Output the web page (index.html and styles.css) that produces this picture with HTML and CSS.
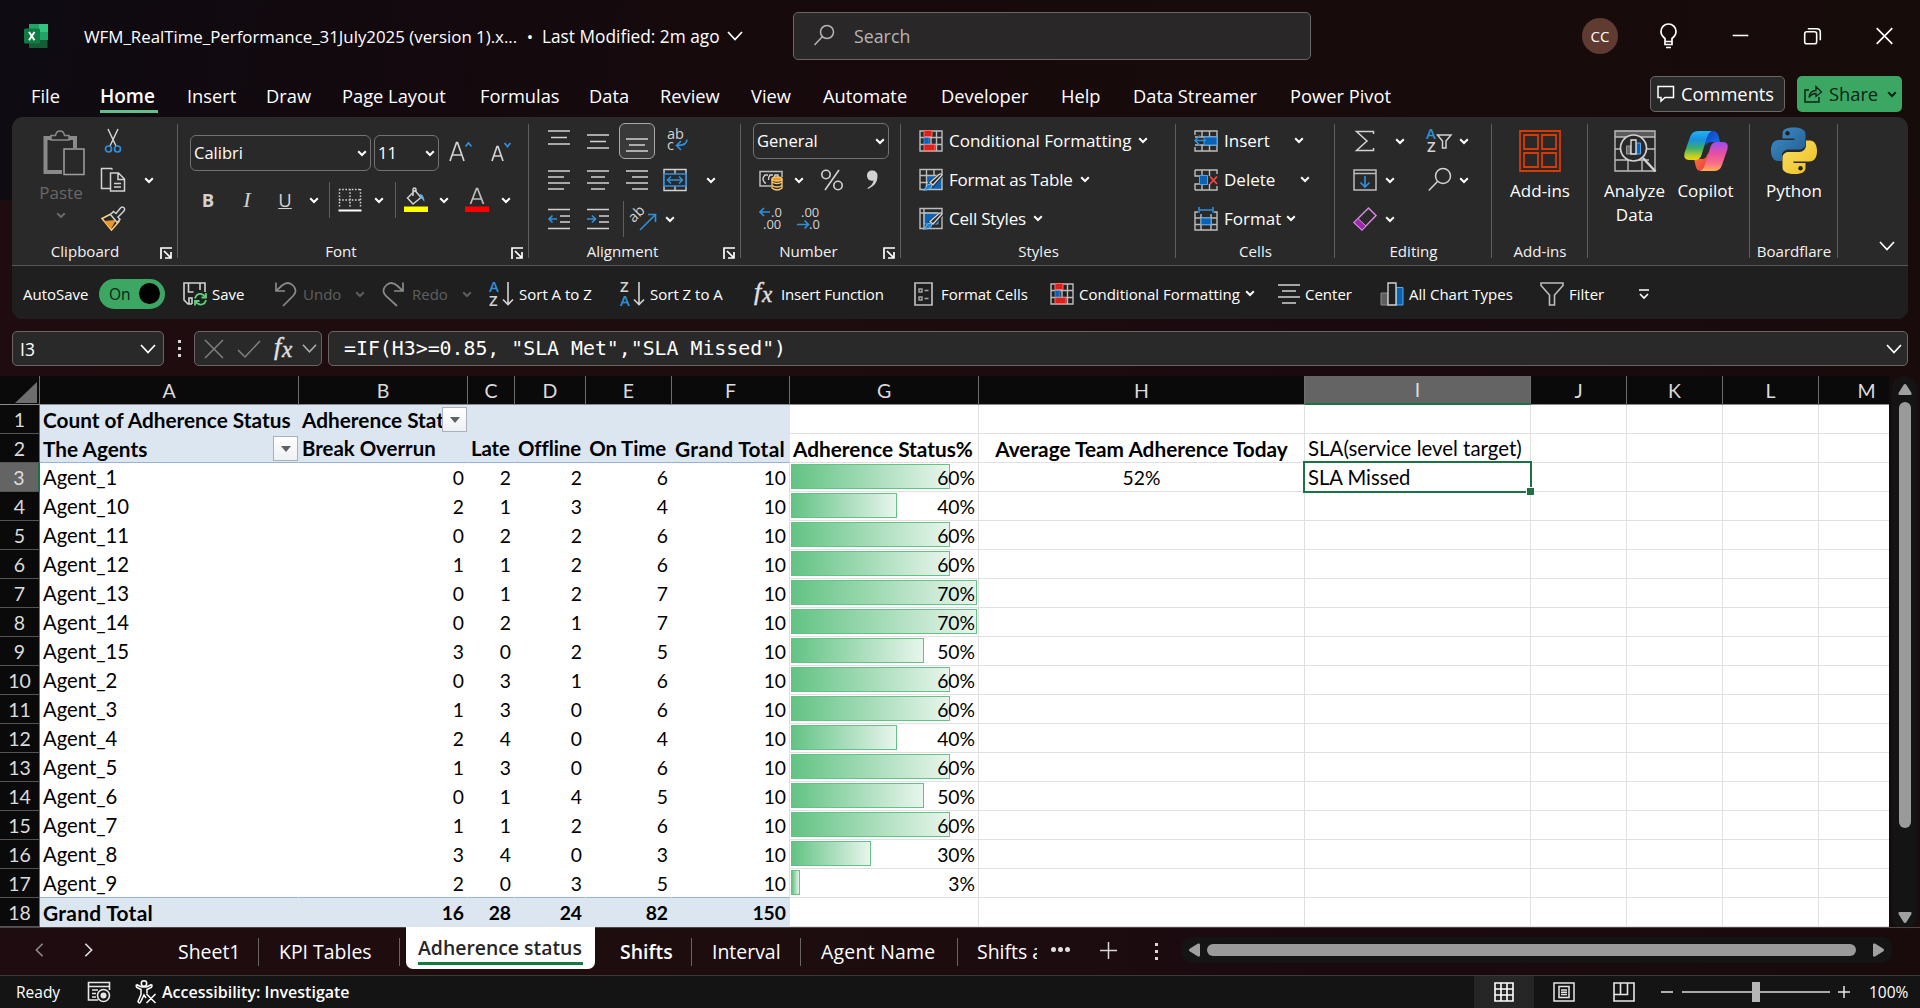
FILE: index.html
```html
<!DOCTYPE html>
<html lang="en">
<head>
<meta charset="utf-8">
<title>WFM_RealTime_Performance_31July2025</title>
<link rel="stylesheet" href="styles.css">
</head>
<body>
<svg class="defs" aria-hidden="true">
  <defs>
    <linearGradient id="g-cool" x1="0" y1="0" x2="0" y2="1"><stop offset="0" stop-color="#22b4f2"/><stop offset=".3" stop-color="#1591e0"/><stop offset=".6" stop-color="#3fae6a"/><stop offset=".85" stop-color="#b9cf2a"/><stop offset="1" stop-color="#f3d10a"/></linearGradient>
    <linearGradient id="g-warm" x1="0" y1="0" x2="0" y2="1"><stop offset="0" stop-color="#9a4df0"/><stop offset=".4" stop-color="#e84fa0"/><stop offset=".75" stop-color="#f9708a"/><stop offset="1" stop-color="#fdb24a"/></linearGradient>
    <linearGradient id="g-deep" x1="0" y1="0" x2="1" y2="1"><stop offset="0" stop-color="#0f3fc4"/><stop offset="1" stop-color="#1a74e8"/></linearGradient>
    <linearGradient id="g-fire" x1="0" y1="0" x2="1" y2="1"><stop offset="0" stop-color="#ff7a3c"/><stop offset="1" stop-color="#e23c3c"/></linearGradient>
    <linearGradient id="g-pyb" x1="0" y1="0" x2="1" y2="1"><stop offset="0" stop-color="#3c8fd0"/><stop offset="1" stop-color="#245a88"/></linearGradient>
    <linearGradient id="g-pyy" x1="1" y1="1" x2="0" y2="0"><stop offset="0" stop-color="#f7e06a"/><stop offset="1" stop-color="#f0bf1c"/></linearGradient>
  </defs>
  <symbol id="chev" viewBox="0 0 10 10"><path d="M1.2 3.2 5 7 8.8 3.2" fill="none" stroke="currentColor" stroke-width="2"/></symbol>
  <symbol id="chev-l" viewBox="0 0 16 16"><path d="M1 4l7 7.5L15 4" fill="none" stroke="currentColor" stroke-width="1.7"/></symbol>
  <symbol id="launch" viewBox="0 0 12 12"><path d="M1 12V1h11M4 4l6.5 6.5M11 5v6H5" fill="none" stroke="#fff" stroke-width="1.7"/></symbol>
  <symbol id="cf" viewBox="0 0 24 22"><path d="M1 1h22v20H1zM1 7.500h22M1 14.500h22M6 1v20M12 1v20M17.500 1v20" fill="none" stroke="#bdbdbd" stroke-width="1.400"/><path d="M5 .500h8v6H5zM5 14.500h11v6H5z" fill="#d9221c" stroke="#ff6b66"/><path d="M5 7.500h5v6.500H5z" fill="#0a62b5" stroke="#5aa8e8" stroke-width=".7"/></symbol>
  <symbol id="brush" viewBox="0 0 24 24"><path d="M22.500 8 14 17.500 11 15 21 6.500z" fill="#292929" stroke="#292929" stroke-width="3"/><path d="M23 7 14 17l-3-2.500L20 6.500q2-1.500 3 .5z" fill="#292929" stroke="#d6d6d6" stroke-width="1.300"/><path d="M13 17.500q-1 5-9 4.500 3-1 3.500-4 2.500-3.500 5.500-.5z" fill="#1f7ecb" stroke="#7cc0f5"/></symbol>
  <symbol id="tbl" viewBox="0 0 24 24"><path d="M8 8h15v14H8z" fill="#0a62b5"/><path d="M1 1.500h22v20H1zM1 7.500h22M1 14.500h8M7.500 1.500v20M15 1.500v6" fill="none" stroke="#bdbdbd" stroke-width="1.400"/><use href="#brush"/></symbol>
  <symbol id="cst" viewBox="0 0 24 24"><path d="M5 6h14v11H5z" fill="#0a62b5" stroke="#4da3e6"/><path d="M1 1.500h22v20H1zM1 6h22M5 1.500v20" fill="none" stroke="#bdbdbd" stroke-width="1.400"/><use href="#brush"/></symbol>
  <symbol id="lc" viewBox="0 0 22 22"><path d="M0 2h22M4 8h14M0 14h22M4 20h14" stroke="#d2d2d2" stroke-width="1.500"/></symbol>
  <symbol id="fx" viewBox="0 0 24 26"><text x="2" y="19" class="fx-f">f</text><text x="10" y="21" class="fx-x">x</text></symbol>
</svg>

<header class="titlebar">
  <svg class="xl" viewBox="0 0 24 24"><path d="M5 0h18.500v24H5z" fill="#185c37"/><path d="M5 0h9.500v8H5z" fill="#21a366"/><path d="M14.500 0H24v8h-9.500z" fill="#33c481"/><path d="M5 8h9.500v8H5z" fill="#107c41"/><path d="M14.500 8H24v8h-9.500z" fill="#21a366"/><rect y="4.500" width="16" height="15" rx="1.500" fill="#107c41"/><path d="M5 8l5.500 8.200M10.500 8 5 16.200" stroke="#fff" stroke-width="2"/></svg>
  <span class="doc">WFM_RealTime_Performance_31July2025 (version 1).x...</span>
  <span class="dot">•</span>
  <span class="mod">Last Modified: 2m ago <svg width="16" height="16"><use href="#chev-l"/></svg></span>
  <div class="search"><svg width="24" height="24" viewBox="0 0 24 24"><g fill="none" stroke="#b5b5b5" stroke-width="1.500"><circle cx="15" cy="8" r="6.500"/><path d="M10.500 12.500 2.500 21"/></g></svg><span>Search</span></div>
  <div class="avatar">CC</div>
  <svg class="win" viewBox="0 0 24 26"><path d="M8.500 18.500v-3C6 13.500 4.500 11.500 4.500 8.500a7.500 7.500 0 0 1 15 0c0 3-1.500 5-4 7v3zM8.500 18.500v3h7v-3M9.500 24.500h5" fill="none" stroke="#fff" stroke-width="1.700"/></svg>
  <svg class="win" viewBox="0 0 24 24"><path d="M4.500 11.500h15" stroke="#fff" stroke-width="1.500"/></svg>
  <svg class="win" viewBox="0 0 24 24"><rect x="4.500" y="8" width="11.500" height="11.500" rx="2" fill="none" stroke="#fff" stroke-width="1.500"/><path d="M7.500 5h8.500q3.500 0 3.500 3.500V16" fill="none" stroke="#fff" stroke-width="1.500"/></svg>
  <svg class="win" viewBox="0 0 24 24"><path d="M4.500 4.500l15 15M19.500 4.500l-15 15" stroke="#fff" stroke-width="1.600"/></svg>
</header>

<nav class="tabs">
  <span>File</span><span class="on">Home</span><span>Insert</span><span>Draw</span><span>Page Layout</span><span>Formulas</span><span>Data</span><span>Review</span><span>View</span><span>Automate</span><span>Developer</span><span>Help</span><span>Data Streamer</span><span>Power Pivot</span>
  <div class="btn comments"><svg width="18" height="18" viewBox="0 0 18 18"><path d="M1 1.500h15.500v11H8L4 16v-3.500H1z" fill="none" stroke="#fff" stroke-width="1.500"/></svg>Comments</div>
  <div class="btn share"><svg width="19" height="18" viewBox="0 0 19 18"><path d="M5 5H1v12h14v-5" fill="none" stroke="#0c2414" stroke-width="1.500"/><path d="M5 12.500C5.500 8 8 5.500 12 5.500V1.500L17.500 7 12 11.500v-3c-3 0-5 1-7 4z" fill="none" stroke="#0c2414" stroke-width="1.300"/></svg>Share<svg class="ch" width="10" height="10"><use href="#chev"/></svg></div>
</nav>

<section class="ribbon">
  <div class="groups">
    <div class="group clipboard">
      <div class="body">
        <div class="paste">
          <svg width="42" height="46" viewBox="0 0 42 46"><path d="M32 18V8H2.500v34H19" fill="none" stroke="#8a8a8a" stroke-width="4"/><path d="M8 10V5.500h4.500C13 2 14.500 1 17 1s4 1 4.500 4.500H26V10z" fill="#292929" stroke="#8a8a8a" stroke-width="1.500"/><path d="M21 19h20v25.500H21z" fill="#292929" stroke="#a0a0a0" stroke-width="1.500"/></svg>
          <span>Paste</span>
          <svg width="10" height="10"><use href="#chev"/></svg>
        </div>
        <div class="clip-tools">
          <svg width="26" height="26" viewBox="0 0 26 26"><path d="M8 1l8 17M18 1l-8 17" stroke="#d2d2d2" stroke-width="1.500"/><g fill="none" stroke="#2f8fd8" stroke-width="1.700"><circle cx="8.500" cy="21" r="3"/><circle cx="17.500" cy="21" r="3"/></g></svg><i></i>
          <svg width="26" height="26" viewBox="0 0 26 26"><path d="M10 21.500H1.500v-20h10l1 1M10.500 6h8l6 6v12h-14zM18 6v6.500h6.500M14 16.500h7M14 20h7" fill="none" stroke="#d2d2d2" stroke-width="1.500"/></svg><svg class="ch" width="10" height="10"><use href="#chev"/></svg>
          <svg width="26" height="26" viewBox="0 0 26 26"><path d="M2 12.500l10-5 7 8-7.500 8.500z" fill="#292929" stroke="#ffd37a" stroke-width="1.500"/><path d="M4 15l12-1-5 9z" fill="#e8962e"/><path d="M10.500 8.500l3-3 2.500 2 4.500-5.500q2.500-2 4 .5.500 1.500-1 3L18 11l2 2.500-3 3z" fill="#292929" stroke="#d2d2d2" stroke-width="1.500"/></svg><i></i>
        </div>
      </div>
      <footer><span>Clipboard</span><svg width="12" height="12"><use href="#launch"/></svg></footer>
    </div>

    <div class="group font">
      <div class="body">
        <div class="font-top">
          <div class="combo">Calibri<svg width="10" height="10"><use href="#chev"/></svg></div>
          <div class="combo">11<svg width="10" height="10"><use href="#chev"/></svg></div>
          <svg class="grow" width="26" height="26" viewBox="0 0 26 26"><path d="M3 23 9.500 4.500h1L17 23M5.500 17h9.500" fill="none" stroke="#d2d2d2" stroke-width="1.700"/><path d="M18.500 8.500 21.500 5l3 3.500" fill="none" stroke="#2f8fd8" stroke-width="1.800"/></svg>
          <svg class="shrink" width="26" height="26" viewBox="0 0 26 26"><path d="M4 23l5-14.500h1L15 23M6 18h7.500" fill="none" stroke="#d2d2d2" stroke-width="1.700"/><path d="M16.500 5l3 3.500 3-3.500" fill="none" stroke="#2f8fd8" stroke-width="1.800"/></svg>
        </div>
        <div class="font-bottom">
          <b>B</b><em>I</em><u>U</u><svg class="ch" width="10" height="10"><use href="#chev"/></svg>
          <span class="sep"></span>
          <svg width="24" height="24" viewBox="0 0 24 24"><path d="M1 1.500h22M1 12h22M1.500 1v19M12 1v19M22.500 1v19" stroke="#d2d2d2" stroke-width="1.500" stroke-dasharray="1.600 1.600"/><path d="M.5 22.500h23" stroke="#fff" stroke-width="2"/></svg>
          <svg class="ch" width="10" height="10"><use href="#chev"/></svg>
          <span class="sep"></span>
          <svg width="26" height="26" viewBox="0 0 26 26"><path d="M4.500 11 12 3.500l6 7-8 6.500zM10 9V3q0-2 1.500-2T13 3v2" fill="none" stroke="#d2d2d2" stroke-width="1.500"/><path d="M17 7q4 0 4.500 8-2-3-4-4z" fill="#69aee6"/><path d="M1 19.500h24V25H1z" fill="#ff0"/></svg>
          <svg class="ch" width="10" height="10"><use href="#chev"/></svg>
          <svg width="26" height="26" viewBox="0 0 26 26"><path d="M6.500 17 12.500 1.500h1l6 15.500M8.500 12h9" fill="none" stroke="#bdbdbd" stroke-width="1.700"/><path d="M1 19.500h24V25H1z" fill="red"/></svg>
          <svg class="ch" width="10" height="10"><use href="#chev"/></svg>
        </div>
      </div>
      <footer><span>Font</span><svg width="12" height="12"><use href="#launch"/></svg></footer>
    </div>

    <div class="group align">
      <div class="body rows">
        <div class="r">
          <svg width="22" height="22" viewBox="0 0 22 22"><path d="M0 1h22M3 7.500h16M0 14h22" stroke="#d2d2d2" stroke-width="1.500"/></svg>
          <svg width="22" height="22" viewBox="0 0 22 22"><path d="M0 5h22M3 11.500h16M0 18h22" stroke="#d2d2d2" stroke-width="1.500"/></svg>
          <span class="sel"><svg width="22" height="22" viewBox="0 0 22 22"><path d="M0 9h22M3 15h16M0 21h22" stroke="#d2d2d2" stroke-width="1.500"/></svg></span>
          <svg class="t" width="26" height="26" viewBox="0 0 26 26"><text x="3" y="11">ab</text><text x="3" y="22">c</text><path d="M23 11.500q0 6-10 6M17 13l-4.500 4.500L17 22" fill="none" stroke="#2f8fd8" stroke-width="1.700"/></svg>
        </div>
        <div class="r">
          <svg width="22" height="22" viewBox="0 0 22 22"><path d="M0 2h22M0 8h16M0 14h22M0 20h16" stroke="#d2d2d2" stroke-width="1.500"/></svg>
          <svg width="22" height="22"><use href="#lc"/></svg>
          <svg width="22" height="22" viewBox="0 0 22 22"><path d="M0 2h22M6 8h16M0 14h22M6 20h16" stroke="#d2d2d2" stroke-width="1.500"/></svg>
          <svg class="merge" width="24" height="24" viewBox="0 0 24 24"><path d="M1 1.500h22v21H1zM12 1.500v21" fill="none" stroke="#d2d2d2" stroke-width="1.400"/><path d="M1 6h22v12H1z" fill="#292929" stroke="#2f8fd8" stroke-width="1.700"/><path d="M5 12h14M8 8.500 4.500 12 8 15.500M16 8.500l3.500 3.500-3.500 3.500" fill="none" stroke="#2f8fd8" stroke-width="1.600"/></svg>
          <svg class="ch" width="10" height="10"><use href="#chev"/></svg>
        </div>
        <div class="r">
          <svg width="22" height="22" viewBox="0 0 22 22"><path d="M0 1.500h22M12 8h10M12 14h10M0 20.500h22" stroke="#d2d2d2" stroke-width="1.500"/><path d="M9 11H1M4.500 7.500 1 11l3.500 3.500" fill="none" stroke="#2f8fd8" stroke-width="1.700"/></svg>
          <svg width="22" height="22" viewBox="0 0 22 22"><path d="M0 1.500h22M12 8h10M12 14h10M0 20.500h22" stroke="#d2d2d2" stroke-width="1.500"/><path d="M0 11h8M5 7.500 8.500 11 5 14.500" fill="none" stroke="#2f8fd8" stroke-width="1.700"/></svg>
          <span class="orient"><svg class="t" width="26" height="26" viewBox="0 0 26 26"><text x="1" y="13" transform="rotate(-45 7 13)">ab</text><path d="M9 24 24 9M17 8.500h7.500V16" fill="none" stroke="#2f8fd8" stroke-width="1.600"/></svg><svg class="ch" width="10" height="10"><use href="#chev"/></svg></span>
        </div>
      </div>
      <footer><span>Alignment</span><svg width="12" height="12"><use href="#launch"/></svg></footer>
    </div>

    <div class="group number">
      <div class="body rows">
        <div class="r1"><div class="combo">General<svg width="10" height="10"><use href="#chev"/></svg></div></div>
        <div class="r">
          <svg width="24" height="24" viewBox="0 0 24 24"><path d="M12 18H1V3.500h22V9" fill="none" stroke="#bdbdbd" stroke-width="1.500"/><path d="M9 7H6q-2 2-2 4t2 4h1M14 7h-3q-1.500 2-1.500 5M19 11V7h-3l-1 3" fill="none" stroke="#d2d2d2" stroke-width="1.400"/><path d="M13 11v9q5 4 10 0v-9M13 14q5 3 10 0M13 17.500q5 3 10 0" fill="#292929" stroke="#f9c768" stroke-width="1.400"/><ellipse cx="18" cy="11" rx="5" ry="2" fill="#e8962e" stroke="#f9c768" stroke-width="1.400"/></svg>
          <svg class="ch" width="10" height="10"><use href="#chev"/></svg>
          <svg width="24" height="24" viewBox="0 0 24 24"><g fill="none" stroke="#d2d2d2" stroke-width="1.600"><circle cx="6" cy="6.500" r="4.200"/><circle cx="18" cy="17.500" r="4.200"/><path d="M19 2 5 22"/></g></svg>
          <svg width="24" height="24" viewBox="0 0 24 24"><path d="M12 2.500a5 5 0 0 1 5.500 5.500c0 6-3 10-9.500 13l-.5-1c4-2.500 5.500-4.500 6-7.500-4 1-6.500-1.500-6.500-5C7 4.500 9 2.500 12 2.500z" fill="#d2d2d2"/></svg>
        </div>
        <div class="r dec">
          <svg class="t" width="26" height="26" viewBox="0 0 26 26"><text x="13" y="11">.0</text><text x="5" y="23">.00</text><path d="M12 6H2M6 2 2 6l4 4" fill="none" stroke="#2f8fd8" stroke-width="1.700"/></svg>
          <svg class="t" width="26" height="26" viewBox="0 0 26 26"><text x="5" y="11">.00</text><text x="13" y="23">.0</text><path d="M1 18.500h11M8.500 14.500l4 4-4 4" fill="none" stroke="#2f8fd8" stroke-width="1.700"/></svg>
        </div>
      </div>
      <footer><span>Number</span><svg width="12" height="12"><use href="#launch"/></svg></footer>
    </div>

    <div class="group styles">
      <div class="body rows">
        <div class="item"><svg width="24" height="22"><use href="#cf"/></svg><span>Conditional Formatting</span><svg class="ch" width="10" height="10"><use href="#chev"/></svg></div>
        <div class="item"><svg width="24" height="24"><use href="#tbl"/></svg><span class="tight">Format as Table</span><svg class="ch" width="10" height="10"><use href="#chev"/></svg></div>
        <div class="item"><svg width="24" height="24"><use href="#cst"/></svg><span class="tight">Cell Styles</span><svg class="ch" width="10" height="10"><use href="#chev"/></svg></div>
      </div>
      <footer><span>Styles</span></footer>
    </div>

    <div class="group cells">
      <div class="body rows">
        <div class="item"><svg width="24" height="22" viewBox="0 0 24 22"><path d="M1 5V1h22v20H1v-4M1 7h22M1 15h22M8 1v6M15.500 1v6M8 15v6M15.500 15v6" fill="none" stroke="#bdbdbd" stroke-width="1.400"/><path d="M10 7h13v8H10z" fill="#0a62b5" stroke="#4da3e6"/><path d="M12 10.500H1M6 5.500l-5 5 5 5" fill="none" stroke="#2f8fd8" stroke-width="1.700"/></svg><span>Insert</span><svg class="ch" width="10" height="10"><use href="#chev"/></svg></div>
        <div class="item"><svg width="24" height="22" viewBox="0 0 24 22"><path d="M1 1h22v4M1 1v6h11M1 21v-6h11M1 21h22v-4M8 1v6M15.500 1v6M8 15v6M15.500 15v6" fill="none" stroke="#bdbdbd" stroke-width="1.400"/><path d="M5.500 6.500h8v9h-8z" fill="#0a62b5" stroke="#4da3e6"/><path d="M16 7.500l7 7.500M23 7.500 16 15" stroke="#f04a45" stroke-width="1.800"/></svg><span>Delete</span><svg class="ch" width="10" height="10"><use href="#chev"/></svg></div>
        <div class="item"><svg width="24" height="26" viewBox="0 0 24 26"><path d="M4 6H1v18h22V6h-3M1 12h22M1 18.500h22M7 8v16M17 8v16" fill="none" stroke="#bdbdbd" stroke-width="1.400"/><path d="M7 12h10v6.500H7z" fill="#0a62b5" stroke="#4da3e6"/><path d="M5 1v6M19 1v6M5 4h14" stroke="#2f8fd8" stroke-width="1.500"/></svg><span>Format</span><svg class="ch" width="10" height="10"><use href="#chev"/></svg></div>
      </div>
      <footer><span>Cells</span></footer>
    </div>

    <div class="group editing">
      <div class="body rows">
        <div class="r wide">
          <svg width="24" height="24" viewBox="0 0 24 24"><path d="M20.500 5V2.500h-17L14 12 3.500 21.500h17V19" fill="none" stroke="#d2d2d2" stroke-width="1.500"/></svg>
          <svg class="ch" width="10" height="10"><use href="#chev"/></svg>
          <svg class="az" width="26" height="26" viewBox="0 0 26 26"><text class="bl" x="0" y="11">A</text><text x="1" y="24">Z</text><path d="M11.500 7H25l-5 6v7h-3.500v-7z" fill="none" stroke="#d2d2d2" stroke-width="1.500"/></svg>
          <svg class="ch" width="10" height="10"><use href="#chev"/></svg>
        </div>
        <div class="r">
          <svg width="24" height="22" viewBox="0 0 24 22"><path d="M1 1h22v20H1zM1 4.500h22" fill="none" stroke="#bdbdbd" stroke-width="1.500"/><path d="M12 7v11M7.500 13.500 12 18l4.500-4.500" fill="none" stroke="#2f8fd8" stroke-width="1.700"/></svg>
          <svg class="ch" width="10" height="10"><use href="#chev"/></svg>
          <svg width="24" height="24" viewBox="0 0 24 24"><g fill="none" stroke="#d2d2d2" stroke-width="1.500"><circle cx="15" cy="8" r="7.500"/><path d="M9.500 13.500.8 22.500"/></g></svg>
          <svg class="ch end" width="10" height="10"><use href="#chev"/></svg>
        </div>
        <div class="r">
          <svg width="24" height="24" viewBox="0 0 24 24"><path d="M1 15.500 15.500 1 23 8.500 9 23z" fill="none" stroke="#d58adf" stroke-width="1.500"/><path d="M1 15.500l4-4 8 7.500-4 4z" fill="#9a2ba8" stroke="#d58adf"/></svg>
          <svg class="ch" width="10" height="10"><use href="#chev"/></svg>
        </div>
      </div>
      <footer><span>Editing</span></footer>
    </div>

    <div class="group big">
      <div class="body">
        <div class="tile"><svg width="42" height="42" viewBox="0 0 42 42"><path d="M1 1h40v40H1zM5 5h14v14H5zM23 5h14v14H23zM5 23h14v14H5zM23 23h14v14H23z" fill="none" stroke="#d83b01" stroke-width="1.800"/></svg><span>Add-ins</span></div>
      </div>
      <footer><span>Add-ins</span></footer>
    </div>

    <div class="group big">
      <div class="body two">
        <div class="tile"><svg width="42" height="42" viewBox="0 0 42 42"><path d="M1 1h40v6H1z" fill="#5a5a5a"/><path d="M1 1h40v40H1zM1 7h40M1 19h8M32 19h9M1 30h34M14 30v11M28 30v11" fill="none" stroke="#bdbdbd" stroke-width="1.400"/><path d="M29 28l12.500 13.500" stroke="#d2d2d2" stroke-width="2.500"/><circle cx="19.500" cy="18" r="13" fill="#292929" stroke="#d2d2d2" stroke-width="1.700"/><path d="M12.500 16h4.500v8h-4.500z" fill="#6b6b6b" stroke="#9a9a9a"/><path d="M22 13h4.500v11H22z" fill="#0a62b5" stroke="#5aa8e8"/><path d="M17 10h5v14h-5z" fill="#292929" stroke="#e6e6e6" stroke-width="1.300"/></svg><span>Analyze<br>Data</span></div>
        <div class="tile"><svg width="44" height="42" viewBox="0 0 44 42"><path d="M23 1h6q4 0 5.500 5l1.500 6h-8q-5 0-6.500 4z" fill="url(#g-deep)"/><path d="M20 41h-3q-4 0-5-4l-2-8h8q4 0 5-4l2-3z" fill="url(#g-fire)"/><path d="M14 1h14q-3 1-4.500 5l-6 19q-1.500 5-6 5H5q-6 0-4.500-7L6 7q2-6 8-6z" fill="url(#g-cool)"/><path d="M30 41H16q3-1 4.500-5l6-19q1.500-5 6-5H39q6 0 4.500 7L38 35q-2 6-8 6z" fill="url(#g-warm)"/></svg><span>Copilot</span></div>
      </div>
      <footer></footer>
    </div>

    <div class="group big py">
      <div class="body">
        <div class="tile"><svg width="48" height="48" viewBox="-1 0 48 48"><path fill="url(#g-pyb)" d="M23 .5C14 .5 11.500 3 11.500 7v4.500h12V13H7.500C3 13 0 17 0 23.500S3 34 7 34h4v-5.500C11 25 14 22.500 17.500 22.500h11c3.500 0 6-2.500 6-5.500V7C34.500 3 30 .5 23 .5z"/><path transform="rotate(180 23 23.700)" fill="url(#g-pyy)" d="M23 .5C14 .5 11.500 3 11.500 7v4.500h12V13H7.500C3 13 0 17 0 23.500S3 34 7 34h4v-4.500c0-4 3-7 6.500-7h11c3.500 0 6-2.500 6-5.500V7C34.500 3 30 .5 23 .5z"/><circle cx="16.500" cy="6.200" r="2.200" fill="#222"/><circle cx="29.500" cy="41.200" r="2.200" fill="#222"/></svg><span>Python</span></div>
      </div>
      <footer><span>Boardflare</span></footer>
    </div>
    <svg class="collapse" width="16" height="16"><use href="#chev-l"/></svg>
  </div>

  <div class="qat">
    <span>AutoSave</span>
    <span class="toggle">On<i></i></span>
    <span class="q"><svg width="24" height="24" viewBox="0 0 24 24"><path d="M9 22H5L1 18V1h21v9M5.500 1v9h5M17 1v7M9 22v-6H6v6" fill="none" stroke="#d2d2d2" stroke-width="1.600"/><path d="M12 16.500q1.500-5 6-4.500 3 .5 4.500 3M23 11v4.500h-4.500M23 18q-1.500 5-6 4.500-3-.5-4.500-3M12 23.500V19h4.500" fill="none" stroke="#5fd07a" stroke-width="1.800"/></svg>Save</span>
    <span class="q off"><svg width="24" height="26" viewBox="0 0 24 26"><path d="M2 1.500V10h9M2 10 8 4.500q6-5 11 0 5 5 0 10.500L9 25" fill="none" stroke="#8a8a8a" stroke-width="1.700"/></svg>Undo<svg class="ch" width="10" height="10"><use href="#chev"/></svg></span>
    <span class="q off"><svg width="24" height="26" viewBox="0 0 24 26"><path d="M20 1.500V10h-9M20 10 14 4.500q-6-5-11 0-5 5 0 10.500L14 25" fill="none" stroke="#8a8a8a" stroke-width="1.700"/></svg>Redo<svg class="ch" width="10" height="10"><use href="#chev"/></svg></span>
    <span class="q"><svg class="az" width="26" height="28" viewBox="0 0 26 28"><text class="bl" x="1" y="12">A</text><text x="1" y="26">Z</text><path d="M20 2v22M15 19.500l5 5 5-5" fill="none" stroke="#d2d2d2" stroke-width="1.600"/></svg>Sort A to Z</span>
    <span class="q"><svg class="az" width="26" height="28" viewBox="0 0 26 28"><text x="1" y="12">Z</text><text class="bl" x="1" y="26">A</text><path d="M20 2v22M15 19.500l5 5 5-5" fill="none" stroke="#d2d2d2" stroke-width="1.600"/></svg>Sort Z to A</span>
    <span class="q ins"><svg width="24" height="26"><use href="#fx"/></svg>Insert Function</span>
    <span class="q fc"><svg width="19" height="24" viewBox="0 0 19 24"><path d="M1 1h17v22H1z" fill="none" stroke="#bdbdbd" stroke-width="1.700"/><path d="M5 7h3v3H5zM5 15h3v3H5zM10.500 8.500h4M10.500 16.500h4" fill="none" stroke="#a5a5a5" stroke-width="1.400"/></svg>Format Cells</span>
    <span class="q"><svg width="24" height="22"><use href="#cf"/></svg>Conditional Formatting<svg class="ch near" width="10" height="10"><use href="#chev"/></svg></span>
    <span class="q"><svg width="22" height="22"><use href="#lc"/></svg>Center</span>
    <span class="q"><svg width="24" height="24" viewBox="0 0 24 24"><path d="M1 11h7v12H1z" fill="#5e5e5e" stroke="#8a8a8a"/><path d="M16 5.500h7V23h-7z" fill="#0a62b5" stroke="#5aa8e8"/><path d="M8 1h8v22H8z" fill="#1f1f1f" stroke="#d2d2d2" stroke-width="1.400"/></svg>All Chart Types</span>
    <span class="q"><svg width="24" height="24" viewBox="0 0 24 24"><path d="M1 1h22v2.500L14.500 13v10h-5V13L1 3.500z" fill="none" stroke="#bdbdbd" stroke-width="1.600"/></svg>Filter</span>
    <svg width="12" height="12" viewBox="0 0 12 12"><path d="M1 2h10M2 6l4 4 4-4" fill="none" stroke="#fff" stroke-width="1.700"/></svg>
  </div>
</section>

<section class="formula">
  <div class="box name">I3<svg width="16" height="16"><use href="#chev-l"/></svg></div>
  <div class="dots"><i></i><i></i><i></i></div>
  <div class="box ops">
    <svg width="20" height="20" viewBox="0 0 20 20"><path d="M1 1l18 18M19 1 1 19" stroke="#808080" stroke-width="1.500"/></svg>
    <svg width="24" height="20" viewBox="0 0 24 20"><path d="M1 11l7 7L23 2" fill="none" stroke="#808080" stroke-width="1.500"/></svg>
    <svg width="24" height="26"><use href="#fx"/></svg>
    <svg width="15" height="15"><use href="#chev-l"/></svg>
  </div>
  <div class="box expr">=IF(H3&gt;=0.85, "SLA Met","SLA Missed")<svg width="16" height="16"><use href="#chev-l"/></svg></div>
</section>

<main class="sheet">
  <div class="grid">
    <table>
      <colgroup><col class="c0"><col class="cA"><col class="cB"><col class="cC"><col class="cD"><col class="cE"><col class="cF"><col class="cG"><col class="cH"><col class="cI"><col class="cJ"><col class="cJ"><col class="cJ"><col class="cJ"></colgroup>
      <thead><tr><th class="corner"><svg width="22" height="22" viewBox="0 0 22 22"><path d="M22 1v21H0z" fill="#6e6e6e"/></svg></th><th>A</th><th>B</th><th>C</th><th>D</th><th>E</th><th>F</th><th>G</th><th>H</th><th class="cur">I</th><th>J</th><th>K</th><th>L</th><th>M</th></tr></thead>
      <tbody>
        <tr class="pv"><th>1</th><td>Count of Adherence Status</td><td class="drop"><span>Adherence Stat</span><i></i></td><td></td><td></td><td></td><td></td><td></td><td></td><td></td><td></td><td></td><td></td><td></td></tr>
        <tr class="pv line"><th>2</th><td class="drop"><span>The Agents</span><i></i></td><td class="bo">Break Overrun</td><td class="rt">Late</td><td class="rt">Offline</td><td class="rt">On Time</td><td class="rt gt">Grand Total</td><td class="hd">Adherence Status%</td><td class="hd mid">Average Team Adherence Today</td><td class="txt">SLA(service level target)</td><td></td><td></td><td></td><td></td></tr>
        <tr><th class="cur">3</th><td>Agent_1</td><td>0</td><td>2</td><td>2</td><td>6</td><td>10</td><td class="bar"><i style="width:159px"></i><span>60%</span></td><td class="mid">52%</td><td class="txt active">SLA Missed</td><td></td><td></td><td></td><td></td></tr>
        <tr><th>4</th><td>Agent_10</td><td>2</td><td>1</td><td>3</td><td>4</td><td>10</td><td class="bar"><i style="width:106px"></i><span>40%</span></td><td></td><td></td><td></td><td></td><td></td><td></td></tr>
        <tr><th>5</th><td>Agent_11</td><td>0</td><td>2</td><td>2</td><td>6</td><td>10</td><td class="bar"><i style="width:159px"></i><span>60%</span></td><td></td><td></td><td></td><td></td><td></td><td></td></tr>
        <tr><th>6</th><td>Agent_12</td><td>1</td><td>1</td><td>2</td><td>6</td><td>10</td><td class="bar"><i style="width:159px"></i><span>60%</span></td><td></td><td></td><td></td><td></td><td></td><td></td></tr>
        <tr><th>7</th><td>Agent_13</td><td>0</td><td>1</td><td>2</td><td>7</td><td>10</td><td class="bar"><i style="width:186px"></i><span>70%</span></td><td></td><td></td><td></td><td></td><td></td><td></td></tr>
        <tr><th>8</th><td>Agent_14</td><td>0</td><td>2</td><td>1</td><td>7</td><td>10</td><td class="bar"><i style="width:186px"></i><span>70%</span></td><td></td><td></td><td></td><td></td><td></td><td></td></tr>
        <tr><th>9</th><td>Agent_15</td><td>3</td><td>0</td><td>2</td><td>5</td><td>10</td><td class="bar"><i style="width:133px"></i><span>50%</span></td><td></td><td></td><td></td><td></td><td></td><td></td></tr>
        <tr><th>10</th><td>Agent_2</td><td>0</td><td>3</td><td>1</td><td>6</td><td>10</td><td class="bar"><i style="width:159px"></i><span>60%</span></td><td></td><td></td><td></td><td></td><td></td><td></td></tr>
        <tr><th>11</th><td>Agent_3</td><td>1</td><td>3</td><td>0</td><td>6</td><td>10</td><td class="bar"><i style="width:159px"></i><span>60%</span></td><td></td><td></td><td></td><td></td><td></td><td></td></tr>
        <tr><th>12</th><td>Agent_4</td><td>2</td><td>4</td><td>0</td><td>4</td><td>10</td><td class="bar"><i style="width:106px"></i><span>40%</span></td><td></td><td></td><td></td><td></td><td></td><td></td></tr>
        <tr><th>13</th><td>Agent_5</td><td>1</td><td>3</td><td>0</td><td>6</td><td>10</td><td class="bar"><i style="width:159px"></i><span>60%</span></td><td></td><td></td><td></td><td></td><td></td><td></td></tr>
        <tr><th>14</th><td>Agent_6</td><td>0</td><td>1</td><td>4</td><td>5</td><td>10</td><td class="bar"><i style="width:133px"></i><span>50%</span></td><td></td><td></td><td></td><td></td><td></td><td></td></tr>
        <tr><th>15</th><td>Agent_7</td><td>1</td><td>1</td><td>2</td><td>6</td><td>10</td><td class="bar"><i style="width:159px"></i><span>60%</span></td><td></td><td></td><td></td><td></td><td></td><td></td></tr>
        <tr><th>16</th><td>Agent_8</td><td>3</td><td>4</td><td>0</td><td>3</td><td>10</td><td class="bar"><i style="width:80px"></i><span>30%</span></td><td></td><td></td><td></td><td></td><td></td><td></td></tr>
        <tr class="line"><th>17</th><td>Agent_9</td><td>2</td><td>0</td><td>3</td><td>5</td><td>10</td><td class="bar"><i style="width:9px"></i><span>3%</span></td><td></td><td></td><td></td><td></td><td></td><td></td></tr>
        <tr class="pv tot"><th>18</th><td class="gt">Grand Total</td><td>16</td><td>28</td><td>24</td><td>82</td><td>150</td><td></td><td></td><td></td><td></td><td></td><td></td><td></td></tr>
      </tbody>
    </table>
  </div>
  <div class="vscroll"><svg width="14" height="11" viewBox="0 0 14 11"><path d="M7 0q1 0 1.500 1L13.500 9q.5 2-1 2h-11Q0 11 .5 9L5.500 1Q6 0 7 0z" fill="#a0a0a0"/></svg><i></i><svg class="dn" width="14" height="11" viewBox="0 0 14 11"><path d="M7 11q1 0 1.500-1L13.500 2q.5-2-1-2h-11Q0 0 .5 2L5.500 10Q6 11 7 11z" fill="#a0a0a0"/></svg></div>
</main>

<nav class="sheets">
  <svg class="arr dim" viewBox="0 0 10 16"><path d="M8.500 1 1.500 8l7 7" fill="none" stroke="currentColor" stroke-width="1.800"/></svg>
  <svg class="arr" viewBox="0 0 10 16"><path d="M1.500 1l7 7-7 7" fill="none" stroke="currentColor" stroke-width="1.800"/></svg>
  <span class="s1">Sheet1</span><span class="s2">KPI Tables</span>
  <span class="act"><b>Adherence status</b></span>
  <span class="s3"><b>Shifts</b></span><span class="s4">Interval</span><span class="s5">Agent Name</span><span class="s6">Shifts a</span>
  <span class="more"><i></i><i></i><i></i></span>
  <svg class="plus" viewBox="0 0 18 18"><path d="M9 0v18M0 9h18" stroke="#d8d8d8" stroke-width="1.600"/></svg>
  <div class="dots"><i></i><i></i><i></i></div>
  <div class="hscroll"><svg width="11" height="14" viewBox="0 0 11 14"><path d="M0 7q0-1 1-1.500L9 .5q2-.5 2 1v11q0 1.500-2 1L1 8.500Q0 8 0 7z" fill="#a0a0a0"/></svg><i></i><svg width="11" height="14" viewBox="0 0 11 14"><path d="M11 7q0-1-1-1.500L2 .5Q0 0 0 1.500v11q0 1.500 2 1l8-5q1-.5 1-1.500z" fill="#a0a0a0"/></svg></div>
</nav>

<footer class="status">
  <span class="ready">Ready</span>
  <svg class="mac" width="24" height="22" viewBox="0 0 24 22"><path d="M11 19H1.500V1.500h21V9M1.500 5.500h21M5 9h6M5 12.500h4M5 16h4" fill="none" stroke="#e6e6e6" stroke-width="1.600"/><circle cx="16.500" cy="14.500" r="6" fill="#141414" stroke="#e6e6e6" stroke-width="1.600"/><circle cx="16.500" cy="14.500" r="3" fill="#e6e6e6"/></svg>
  <svg class="acc" width="22" height="24" viewBox="0 0 22 24"><circle cx="9" cy="3.500" r="2.700" fill="none" stroke="#fff" stroke-width="1.500"/><path d="M1.500 4.500Q.5 7 3 8l3 1.500v5l-3 7q1 2.500 2.500.500L9 15l2 3M16.500 4.500Q18 7 15 8l-3 1.500v4M1.500 4.500l5 2.500h5l5-2.500M11.500 14l9 9M20.500 14l-9 9" fill="none" stroke="#fff" stroke-width="1.500"/></svg>
  <b>Accessibility: Investigate</b>
  <div class="views">
    <span class="v on"><svg width="20" height="20" viewBox="0 0 20 20"><path d="M1 1h18v18H1zM1 7h18M1 13h18M7 1v18M13 1v18" fill="none" stroke="#fff" stroke-width="1.600"/></svg></span>
    <span class="v"><svg width="22" height="20" viewBox="0 0 22 20"><path d="M1 1h20v18H1zM6 4.500h10v11H6zM8 8h6M8 10.300h6M8 12.600h6" fill="none" stroke="#e6e6e6" stroke-width="1.500"/></svg></span>
    <span class="v"><svg width="22" height="20" viewBox="0 0 22 20"><path d="M1 1h20v18H1zM7.500 1v11M1 12.500h13.500V1" fill="none" stroke="#e6e6e6" stroke-width="1.600"/></svg></span>
  </div>
  <svg class="zm" width="12" height="12" viewBox="0 0 12 12"><path d="M0 6h12" stroke="#e6e6e6" stroke-width="1.500"/></svg>
  <div class="slider"><i></i></div>
  <svg class="zp" width="12" height="12" viewBox="0 0 12 12"><path d="M0 6h12M6 0v12" stroke="#e6e6e6" stroke-width="1.500"/></svg>
  <span class="pct">100%</span>
</footer>
</body>
</html>
```
FILE: styles.css
```css
*, *::before, *::after { box-sizing: border-box; }
html, body { margin: 0; height: 100%; overflow: hidden; }
body {
  width: 1920px; height: 1008px; display: flex; flex-direction: column;
  background: linear-gradient(100deg, #0e0b12 0, #12090e 18%, #180a0c 45%, #160c0a 100%) 0 0 / 100% 200px no-repeat,
              linear-gradient(90deg, #1e0c10, #1e0d0e 40%, #1a0a10 70%, #190b0c) #1b0b0f;
  color: #fff; font-family: "Open Sans", "Noto Sans", sans-serif; font-size: 17px; white-space: nowrap;
}
svg { display: block; flex: none; overflow: visible; }
.defs { position: absolute; width: 0; height: 0; }
i { font-style: normal; }

/* title bar */
.titlebar { height: 72px; flex: none; display: grid; grid-template-columns: 60px 437px 18px 254px 518px 321px repeat(4, 72px); align-items: center; padding-left: 24px; }
.xl { width: 24px; height: 24px; }
.doc { font-size: 16.850px; }
.dot { font-size: 17px; text-align: center; }
.mod { font-size: 17.300px; display: flex; align-items: center; gap: 7px; padding-left: 3px; }
.search { width: 518px; height: 48px; border: 1px solid #6b6767; border-radius: 5px; background: #2a2728; display: flex; align-items: center; padding-left: 18px; gap: 18px; color: #b8b5b5; font-size: 17.800px; }
.avatar { width: 36px; height: 36px; border-radius: 50%; background: #5f3b31; font-size: 15px; display: grid; place-items: center; margin-left: auto; margin-right: 14px; }
.win { width: 25px; height: 26px; justify-self: center; }

/* ribbon tabs */
.tabs { height: 45px; flex: none; display: grid; grid-template-columns: 69px 87px 79px 76px 138px 109px 71px 91px 72px 118px 120px 72px 157px 360px 147px 105px; padding-left: 31px; font-size: 18.300px; line-height: 48px; }
.tabs .on { font-weight: 600; width: 58px; font-size: 19px; height: 41px; border-bottom: 3px solid #62c088; }
.btn { height: 36px; margin-top: 4px; border-radius: 5px; display: flex; align-items: center; line-height: 34px; font-size: 18.300px; }
.comments { width: 135px; background: #292929; border: 1px solid #6b6767; padding-left: 6px; gap: 6px; }
.share { background: #3ba763; color: #0c2414; padding-left: 7px; gap: 6px; }
.share .ch { margin-left: 3px; }

/* ribbon */
.ribbon { width: 1896px; height: 202px; margin-left: 12px; flex: none; border-radius: 11px; overflow: hidden; background: #292929; }
.groups { height: 149px; border-bottom: 1px solid #575757; display: grid; grid-template-columns: 166px 351px 212px 160px 275px 159px 157px 96px 162px 88px 1fr; }
.group { display: flex; flex-direction: column; padding-top: 4.500px; background: linear-gradient(#5e5e5e, #5e5e5e) right 7px / 1px 134px no-repeat; }
.group .body { height: 117px; }
.group footer { height: 26px; display: flex; align-items: center; justify-content: center; font-size: 15.100px; position: relative; color: #f2f2f2; padding-bottom: 1px; }
.group footer svg { position: absolute; right: 6px; top: 8px; }
.clipboard footer { padding-right: 20px; }
.font footer, .align footer, .number footer { padding-right: 25px; }
.collapse { align-self: end; margin: 0 0 11px 41px; }
.clipboard .body { display: grid; grid-template-columns: 98px 1fr; }
.paste { display: flex; flex-direction: column; align-items: center; padding-top: 8px; color: #686868; font-size: 17px; }
.paste svg:first-child { margin-left: 6px; }
.paste span { line-height: 25px; margin-top: 4px; }
.paste svg:last-child { margin-top: 5px; }
.clip-tools { display: grid; grid-template: repeat(3, 39px) / 28px 36px; align-items: center; margin-left: -11px; justify-items: center; }
.clip-tools .ch { margin-left: 7px; }
.combo { height: 36px; border: 1px solid #727272; border-radius: 6px; display: flex; align-items: center; justify-content: space-between; padding: 0 3px; font-size: 16.500px; }
.font-top { display: grid; grid-template-columns: 181px 65px 41px 41px; gap: 3px; padding: 13px 0 0 12px; align-items: center; }
.font-top > svg { justify-self: center; margin: -4px 5px 0 0; }
.font-top .shrink { margin-right: 11px; }
.font-bottom { display: grid; grid-template-columns: 40px 38px 38px 20px 11px 30px 28px 4px 38px 18px 48px 10px; padding: 11px 0 0 10px; height: 46px; align-items: center; justify-items: center; color: #d2d2d2; font-size: 18.500px; }
.font-bottom em { font-family: "Liberation Serif", serif; font-size: 22px; }
.font-bottom .ch { color: #fff; }
.sep { width: 1px; height: 36px; background: #5e5e5e; }
.rows { display: grid; grid-template-rows: repeat(3, 39px); }
.r { display: grid; align-items: center; justify-items: center; }
.align .r { grid-template-columns: 39px 39px 39px 41px 23px; padding-left: 10px; justify-content: start; }
.align .ch { margin-left: 5px; }
.align .merge { margin-right: 4px; }
.sel { width: 36px; height: 36px; border: 1px solid #a8a8a8; border-radius: 6px; background: #3a3a3a; display: grid; place-items: center; }
.orient { display: flex; align-items: center; gap: 3px; margin-left: 25px; border-left: 1px solid #5e5e5e; height: 36px; padding-left: 7px; }
.orient .ch { margin-left: 5px; }
.t text { fill: #d2d2d2; font-size: 14.500px; }
.dec text { font-size: 13px; }
.r1 { padding: 1px 0 0 12px; }
.number .combo { width: 136px; }
.number .r { grid-template-columns: 36px 20px 46px 34px; padding-left: 12px; justify-content: start; }
.number .r.dec { grid-template-columns: 36px 40px; }
.item { display: flex; align-items: center; padding-left: 18px; gap: 6px; font-size: 17px; }
.item span { margin-top: -1px; }
.tight { letter-spacing: -.2px; }
.styles .ch, .cells .ch { margin-top: -2px; margin-left: 1px; }
.cells .item span { width: 57px; }
.cells .item .ch { margin-left: 7px; }
.cells .item:nth-child(2) .ch { margin-left: 13px; }
.cells .item:nth-child(3) .ch { margin-left: -1px; }
.editing .r { grid-template-columns: 24px 26px 74px 24px; padding-left: 18px; justify-content: start; }
.editing .r.wide { grid-template-columns: 24px 46px 32px 18px; }
.editing .ch.end { justify-self: start; margin-left: -18px; }
.az text { fill: #d2d2d2; font-size: 15px; font-weight: 600; }
.az .bl { fill: #2f8fd8; }
.tile { display: flex; flex-direction: column; align-items: center; padding-top: 8px; text-align: center; font-size: 17px; line-height: 24px; }
.tile span { margin-top: 7px; }
.two { display: grid; grid-template-columns: 69px 69px; padding-left: 12px; gap: 2px; }
.py .tile { padding-top: 5px; }
.py .tile span { margin-top: 4px; }
.fx-f, .fx-x { font: italic 26px "Liberation Serif", serif; fill: #e0e0e0; stroke: #e0e0e0; stroke-width: .4px; }
.fx-x { font-size: 23px; }

/* quick access toolbar */
.qat { height: 53px; background: #1f1f1f; display: grid; grid-template-columns: 76px 84px 91px 109px 105px 131px 133px 162px 136px 228px 102px 160px 98px 12px; padding: 2px 0 0 11px; align-items: center; font-size: 15px; }
.q { display: flex; align-items: center; gap: 5px; }
.q.fc { gap: 8px; }
.ins { letter-spacing: -.15px; }
.off { color: #5f5f5f; }
.off .ch { margin-left: 9px; }
.near { margin-top: -2px; }
.toggle { width: 66px; height: 30px; border-radius: 15px; background: #3ba763; color: #0c2414; display: flex; align-items: center; justify-content: space-between; padding: 0 5px 0 10px; font-size: 15.500px; }
.toggle i { width: 21px; height: 21px; border-radius: 50%; background: #000; }

/* formula bar */
.formula { height: 57px; flex: none; display: grid; grid-template-columns: 152px 30px 128px 1586px; padding: 12px 0 0 12px; align-items: start; }
.box { height: 35px; background: #292929; border: 1px solid #6b6464; border-radius: 5px; display: flex; align-items: center; }
.name { padding: 0 7px 0 7px; justify-content: space-between; font-size: 17.500px; }
.dots { height: 35px; display: flex; flex-direction: column; align-items: center; justify-content: center; gap: 4px; }
.dots i { width: 3px; height: 3px; background: #d8d8d8; }
.ops { padding-left: 9px; gap: 13px; }
.ops svg:nth-child(3) { margin-left: -2px; }
.ops svg:last-child { margin-left: -7px; color: #aaa; }
.expr { margin-left: 6px; width: 1580px; padding: 0 5px 0 15px; justify-content: space-between; font: 19.850px "DejaVu Sans Mono", monospace; }

/* worksheet */
.sheet { height: 551px; flex: none; display: flex; gap: 3px; }
.grid { width: 1889px; height: 551px; overflow: hidden; background: #fff; }
table { table-layout: fixed; width: 1915px; border-spacing: 0; font-family: Lato, "Open Sans", sans-serif; font-size: 20.300px; color: #000; }
.c0 { width: 40px; } .cA { width: 259px; } .cB { width: 169px; } .cC { width: 47px; } .cD { width: 71px; } .cE { width: 86px; } .cF { width: 118px; } .cG { width: 189px; } .cH { width: 326px; } .cI { width: 226px; } .cJ { width: 96px; }
tr { height: 29px; }
th, td { height: 29px; padding: 1px 3px 0; line-height: 27px; overflow: hidden; }
th { background: #0a0a0a; color: #dcdcdc; font-weight: 400; font-size: 19.500px; border-bottom: 1px solid #555; border-right: 1px solid #6e6e6e; text-align: center; padding: 1px 0 0; }
thead th { border-bottom-color: #8c8c8c; }
thead .cur { background: #646464; border-bottom: 2px solid #1e7145; line-height: 26px; }
tbody .cur { background: #646464; border-right: 2px solid #1e7145; }
.corner svg { margin: 2px 0 0 15px; }
td { border-right: 1px solid #e0e0e0; border-bottom: 1px solid #e0e0e0; text-align: right; font-size: 19.300px; }
td:nth-child(-n+7) { border-color: transparent; }
td:nth-child(7) { border-right-color: #e0e0e0; }
td:nth-child(2) { text-align: left; font-size: 20.300px; }
.pv td:nth-child(-n+7) { background: #dce6f1; font-weight: 700; }
.pv td:nth-child(7) { border-right-color: #dce6f1; }
.pv td { text-align: left; font-size: 20.800px; }
.pv td:nth-child(2) { font-size: 20.800px; }
.pv td.bo { font-size: 20.400px; }
.pv .rt { text-align: right; padding-right: 5px; font-size: 20.400px; letter-spacing: -.1px; }
.pv td.gt { font-size: 20.900px; letter-spacing: .3px; }
.pv.tot td:nth-child(n+3) { text-align: right; font-size: 19.300px; }
.line td:nth-child(-n+7) { border-bottom-color: #95b3d7; }
td.hd { font-weight: 700; }
.pv td.mid, td.mid { text-align: center; }
td.txt { text-align: left; font-size: 20.200px; }
.pv td.txt { font-size: 20.450px; }
.drop { position: relative; }
.drop span { display: block; }
.drop i { position: absolute; right: 0; top: 2px; width: 25px; height: 25px; border: 1px solid #a9b1bd; background: linear-gradient(#fff, #eef0f4); }
.drop i::after { content: ""; position: absolute; left: 7px; top: 9px; border: 5px solid transparent; border-top: 6px solid #606060; border-bottom: 0; }
.bar { position: relative; padding-right: 3px; }
.bar i { position: absolute; left: 1px; top: 1px; height: 25px; border: 1px solid #63c384; background: linear-gradient(90deg, #63c384, #e8f5ec); }
.bar span { position: relative; }
.active { position: relative; overflow: visible; }
.active::before { content: ""; position: absolute; left: -2px; top: -2px; width: 229px; height: 32px; border: 2px solid #1e7145; }
.active::after { content: ""; position: absolute; right: -4px; bottom: -4px; width: 8px; height: 8px; background: #1e7145; border: 1px solid #fff; border-width: 1px 0 0 1px; }
.vscroll { width: 25px; height: 553px; border-radius: 12px; background: #141414; display: flex; flex-direction: column; align-items: center; padding-top: 8px; }
.vscroll i { width: 12px; height: 426px; margin-top: 7px; border-radius: 6px; background: #9a9a9a; }
.vscroll .dn { margin-top: 84px; }

/* sheet tabs */
.sheets { height: 48px; flex: none; border-top: 1px solid #4d4546; display: flex; align-items: flex-start; font-size: 19.450px; line-height: 48px; }
.arr { width: 9px; height: 16px; margin: 14px 0 0 35px; color: #e0e0e0; }
.arr + .arr { margin-left: 40px; }
.dim { color: #8f8a8b; }
.sheets > span { position: relative; flex: none; }
.s1, .s2, .s3, .s4, .s5 { background: linear-gradient(#6b6464, #6b6464) right 10px / 1px 28px no-repeat; }
.s1 { width: 174px; padding-left: 93px; margin-left: -8px; }
.s2 { width: 141px; padding-left: 20px; }
.act { width: 189px; height: 42px; margin-left: 6px; margin-top: -1px; background: #fff; color: #262626; border-radius: 0 0 7px 7px; padding-left: 12px; line-height: 42px; }
.act b { display: block; width: 165px; height: 38px; font-weight: 600; font-size: 19.400px; border-bottom: 3px solid #107c41; }
.s3 { width: 97px; padding-left: 25px; }
.s3 b { font-weight: 600; }
.s4 { width: 109px; padding-left: 20px; }
.s5 { width: 157px; padding-left: 20px; letter-spacing: .25px; }
.s6 { width: 79px; padding-left: 19px; overflow: hidden; }
.more { display: flex; gap: 2px; margin: 19px 0 0 14px; }
.more i { width: 5px; height: 5px; border-radius: 50%; background: #e0e0e0; }
.plus { width: 17px; height: 17px; margin: 14px 0 0 30px; }
.sheets .dots { margin: 6px 0 0 38px; }
.hscroll { width: 711px; height: 26px; margin: 9px 0 0 23px; border-radius: 10px; background: #141414; display: flex; align-items: center; padding-left: 8px; }
.hscroll i { width: 649px; height: 12px; border-radius: 6px; background: #9a9a9a; margin: 0 17px 0 7px; }

/* status bar */
.status { height: 33px; flex: none; background: #141414; border-top: 1px solid #3c3838; display: flex; align-items: center; padding-left: 16px; font-size: 15.500px; }
.ready { width: 71px; }
.acc { margin: 0 5px 0 24px; }
.status b { font-weight: 600; font-size: 16px; }
.views { display: flex; margin-left: auto; align-self: stretch; }
.v { width: 60px; display: grid; place-items: center; padding-right: 1px; }
.v.on { background: #262626; }
.zm { margin-left: 7px; }
.slider { width: 148px; height: 2px; background: #a8a8a8; margin: 0 8px 0 9px; display: flex; align-items: center; justify-content: center; }
.slider i { width: 8px; height: 20px; background: #b5b5b5; }
.pct { width: 39px; margin: 0 12px 0 19px; font-size: 15.500px; }
```
